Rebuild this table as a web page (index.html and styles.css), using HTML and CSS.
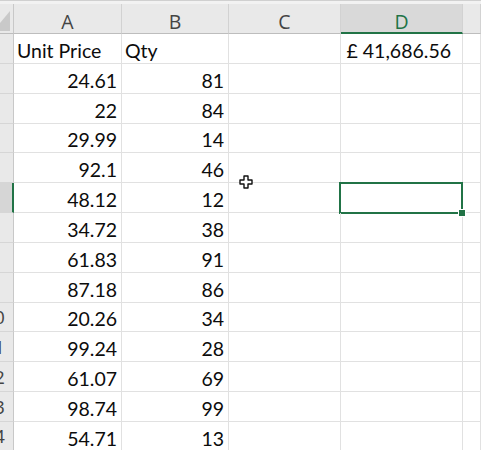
FILE: index.html
```html
<!DOCTYPE html>
<html>
<head>
<meta charset="utf-8">
<link rel="stylesheet" href="styles.css">
</head>
<body>
<div class="sheet">
  <div class="topstrip"></div>
  <div class="row head">
    <div class="corner"><svg class="tri" width="14" height="30" viewBox="0 0 14 30"><polygon points="0,19 10,7 10,27 0,27" fill="#c9c9c9"/></svg></div>
    <div class="ch">A</div>
    <div class="ch">B</div>
    <div class="ch">C</div>
    <div class="ch sel">D</div>
    <div class="ch"></div>
  </div>
  <div class="row"><div class="rh"><span>1</span></div><div class="c">Unit Price</div><div class="c">Qty</div><div class="c"></div><div class="c r acc">£ 41,686.56</div><div class="c"></div></div>
  <div class="row"><div class="rh"><span>2</span></div><div class="c r">24.61</div><div class="c r">81</div><div class="c"></div><div class="c"></div><div class="c"></div></div>
  <div class="row"><div class="rh"><span>3</span></div><div class="c r">22</div><div class="c r">84</div><div class="c"></div><div class="c"></div><div class="c"></div></div>
  <div class="row"><div class="rh"><span>4</span></div><div class="c r">29.99</div><div class="c r">14</div><div class="c"></div><div class="c"></div><div class="c"></div></div>
  <div class="row"><div class="rh"><span>5</span></div><div class="c r">92.1</div><div class="c r">46</div><div class="c"></div><div class="c"></div><div class="c"></div></div>
  <div class="row"><div class="rh on"><span>6</span></div><div class="c r">48.12</div><div class="c r">12</div><div class="c"><svg class="cursor" width="14" height="14" viewBox="0 0 14 14"><path d="M5 1h4v4h4v4h-4v4h-4v-4h-4v-4h4z" fill="#fff" stroke="#111" stroke-width="1.4" stroke-linejoin="round"/></svg></div><div class="c active"></div><div class="c"></div></div>
  <div class="row"><div class="rh"><span>7</span></div><div class="c r">34.72</div><div class="c r">38</div><div class="c"></div><div class="c"></div><div class="c"></div></div>
  <div class="row"><div class="rh"><span>8</span></div><div class="c r">61.83</div><div class="c r">91</div><div class="c"></div><div class="c"></div><div class="c"></div></div>
  <div class="row"><div class="rh"><span>9</span></div><div class="c r">87.18</div><div class="c r">86</div><div class="c"></div><div class="c"></div><div class="c"></div></div>
  <div class="row"><div class="rh"><span>10</span></div><div class="c r">20.26</div><div class="c r">34</div><div class="c"></div><div class="c"></div><div class="c"></div></div>
  <div class="row"><div class="rh"><span>11</span></div><div class="c r">99.24</div><div class="c r">28</div><div class="c"></div><div class="c"></div><div class="c"></div></div>
  <div class="row"><div class="rh"><span>12</span></div><div class="c r">61.07</div><div class="c r">69</div><div class="c"></div><div class="c"></div><div class="c"></div></div>
  <div class="row"><div class="rh"><span>13</span></div><div class="c r">98.74</div><div class="c r">99</div><div class="c"></div><div class="c"></div><div class="c"></div></div>
  <div class="row"><div class="rh"><span>14</span></div><div class="c r">54.71</div><div class="c r">13</div><div class="c"></div><div class="c"></div><div class="c"></div></div>
</div>
</body>
</html>
```
FILE: styles.css
```css
* { box-sizing: border-box; }
html, body { margin: 0; padding: 0; background: #fff; }
body { width: 481px; height: 450px; overflow: hidden; }
.sheet { display: flex; flex-direction: column; width: 481px; }
.topstrip { height: 4px; background: #f2f2f2; border-top: 1px solid #d0d0d0; }
.row {
  display: grid;
  grid-template-columns: 14px 108px 107px 112px 122px 18px;
  height: 29.85px;
}
.row.head { height: 30px; }
.corner {
  background: #e9e9e9;
  border-right: 1px solid #c8c8c8;
  border-bottom: 1px solid #bdbdbd;
  overflow: hidden;
}
.tri { display: block; }
.ch {
  background: #e9e9e9;
  border-right: 1px solid #d2d2d2;
  border-bottom: 1px solid #bdbdbd;
  font-family: "Open Sans", "Noto Sans", sans-serif;
  font-size: 19.5px;
  line-height: 20px;
  color: #444;
  display: flex;
  justify-content: center;
  align-items: flex-end;
  padding-bottom: 1px;
}
.ch.sel {
  background: #d9d9d9;
  color: #217346;
  border-bottom: 2px solid #217346;
  padding-bottom: 0;
}
.rh {
  background: #e9e9e9;
  border-right: 1px solid #c8c8c8;
  border-bottom: 1px solid #d6d6d6;
  font-family: "Open Sans", "Noto Sans", sans-serif;
  font-size: 19px;
  color: #444;
  display: flex;
  justify-content: flex-end;
  align-items: center;
  overflow: hidden;
  white-space: nowrap;
}
.rh span {
  flex: 0 0 36px;
  width: 36px;
  text-align: center;
  margin-right: 1px;
}
.rh.on { background: #d6d6d6; border-right: 2px solid #217346; }
.rh.on span { margin-right: 0; }
.c {
  position: relative;
  border-right: 1px solid #e1e1e1;
  border-bottom: 1px solid #e1e1e1;
  font-family: Lato, "Liberation Sans", sans-serif;
  font-size: 19.5px;
  line-height: 20px;
  color: #0c0c0c;
  display: flex;
  align-items: flex-end;
  padding: 0 3px 2px 3px;
  white-space: nowrap;
}
.c.r { justify-content: flex-end; padding-right: 4px; }
.c.acc { padding-right: 11px; }
.c.active::after {
  content: "";
  position: absolute;
  left: -2px; top: -1px; right: -1px; bottom: -2px;
  border: 2px solid #217346;
}
.c.active::before {
  content: "";
  position: absolute;
  right: -4px; bottom: -5px;
  width: 6px; height: 6px;
  background: #217346;
  border: 1px solid #fff;
  z-index: 2;
}
.cursor { position: absolute; left: 10px; top: -8px; }
```
